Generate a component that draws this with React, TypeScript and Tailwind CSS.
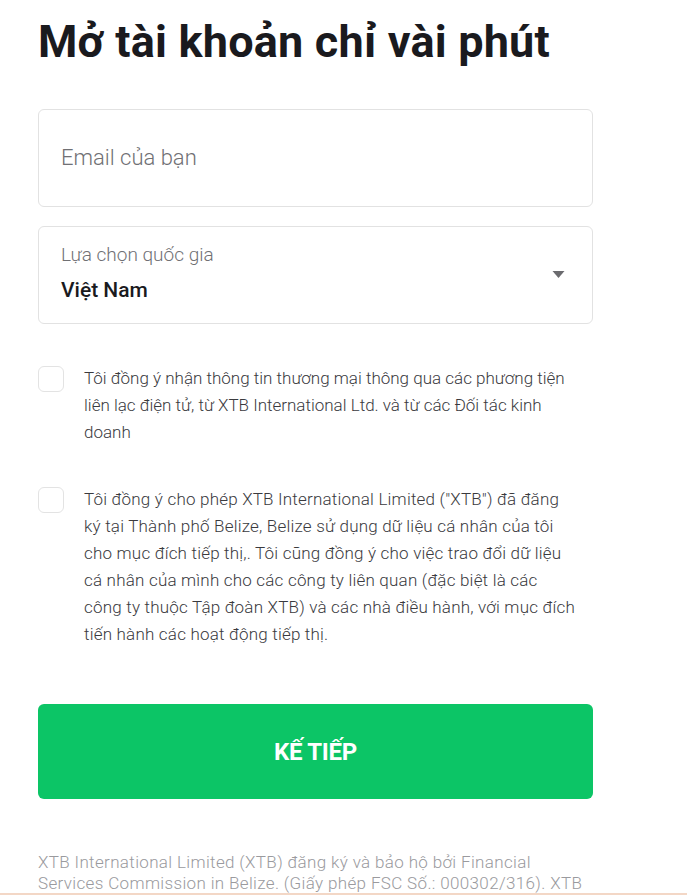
import { useState } from "react";

const consentLines = [
  'Tôi đồng ý cho phép XTB International Limited ("XTB") đã đăng',
  "ký tại Thành phố Belize, Belize sử dụng dữ liệu cá nhân của tôi",
  "cho mục đích tiếp thị,. Tôi cũng đồng ý cho việc trao đổi dữ liệu",
  "cá nhân của mình cho các công ty liên quan (đặc biệt là các",
  "công ty thuộc Tập đoàn XTB) và các nhà điều hành, với mục đích",
  "tiến hành các hoạt động tiếp thị.",
];

function Checkbox({ checked, onChange }: { checked: boolean; onChange: () => void }) {
  return (
    <button
      type="button"
      onClick={onChange}
      className="mt-[1px] h-[26px] w-[26px] shrink-0 rounded-[6px] border border-[#e3e3e3] bg-white"
    />
  );
}

export default function App() {
  const [email, setEmail] = useState("");
  const [c1, setC1] = useState(false);
  const [c2, setC2] = useState(false);

  return (
    <div
      className="min-h-screen bg-white text-[#1c1c1f]"
      style={{ fontFamily: "Roboto, 'Noto Sans', sans-serif" }}
    >
      <div className="ml-[38px] w-[555px] pt-[14px]">
        <h1 className="text-[45px] font-bold leading-[56px] tracking-[0.2px] text-[#1a1a1e]">
          Mở tài khoản chỉ vài phút
        </h1>

        <div className="mt-[39px] flex h-[98px] items-center rounded-[6px] border border-[#e2e2e2] px-[22px] pb-[2px]">
          <input
            className="w-full bg-transparent text-[22px] font-light text-[#222] outline-none placeholder:text-[#707074]"
            placeholder="Email của bạn"
            value={email}
            onChange={(e) => setEmail(e.target.value)}
          />
        </div>

        <div className="mt-[19px] flex h-[98px] items-center justify-between rounded-[6px] border border-[#e2e2e2] pb-[4px] pl-[22px] pr-[27px]">
          <div className="flex flex-col">
            <span className="text-[19px] font-light leading-[24px] text-[#707074]">Lựa chọn quốc gia</span>
            <span className="mt-[10px] text-[21px] font-medium leading-[26px] text-[#1a1a1e]">Việt Nam</span>
          </div>
          <svg width="13" height="9" viewBox="0 0 13 9" className="mt-[2px]">
            <path d="M0.5 1 L12.5 1 L6.5 8 Z" fill="#6b6b6f" />
          </svg>
        </div>

        <div className="mt-[41px] flex gap-[20px] pr-[3px]">
          <Checkbox checked={c1} onChange={() => setC1(!c1)} />
          <p className="text-[17px] font-light leading-[27px] text-[#3a3a3e]">
            Tôi đồng ý nhận thông tin thương mại thông qua các phương tiện liên lạc điện tử, từ XTB International Ltd. và từ các Đối tác kinh doanh
          </p>
        </div>

        <div className="mt-[40px] flex gap-[20px]">
          <Checkbox checked={c2} onChange={() => setC2(!c2)} />
          <p className="text-[17px] font-light leading-[27px] tracking-[0.2px] text-[#3a3a3e]">
            {consentLines.map((line) => (
              <span key={line} className="block whitespace-nowrap">
                {line}
              </span>
            ))}
          </p>
        </div>

        <button
          type="button"
          className="mt-[56px] flex h-[95px] w-full items-center justify-center rounded-[6px] bg-[#0cc566] text-[24px] font-bold tracking-[-0.3px] text-white"
        >
          KẾ TIẾP
        </button>

        <p className="mt-[53px] text-[17px] font-light leading-[21px] tracking-[0.35px] text-[#9a9a9e]">
          XTB International Limited (XTB) đăng ký và bảo hộ bởi Financial Services Commission in Belize. (Giấy phép FSC Số.: 000302/316). XTB International Limited là một phần của Tập đoàn XTB.
        </p>
      </div>
      <div className="fixed bottom-0 left-0 h-[2px] w-full bg-[#f3d7c6]" />
    </div>
  );
}
